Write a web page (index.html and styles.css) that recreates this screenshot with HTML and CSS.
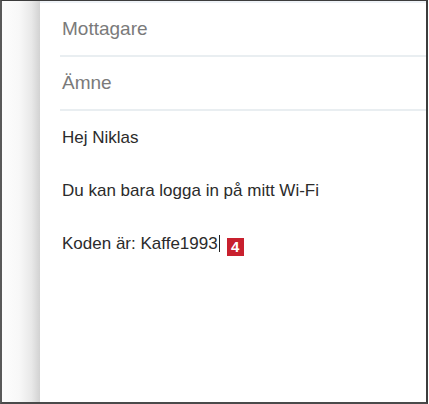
FILE: index.html
```html
<!DOCTYPE html>
<html lang="sv">
<head>
    <meta charset="UTF-8">
    <meta name="viewport" content="width=device-width, initial-scale=1.0">
    <title>Nytt meddelande</title>
    <link rel="stylesheet" href="styles.css">
</head>
<body>
    <div class="frame">
        <!-- Shadow strip on the left -->
        <div class="side-shadow"></div>

        <!-- Compose panel -->
        <div class="compose">
            <div class="field">Mottagare</div>
            <div class="field">Ämne</div>

            <div class="message-body">
                <p>Hej Niklas</p>
                <p>Du kan bara logga in på mitt Wi-Fi</p>
                <p>Koden är: Kaffe1993<span class="caret"></span><span class="badge">4</span></p>
            </div>
        </div>
    </div>
</body>
</html>
```

FILE: styles.css
```css
html, body {
    margin: 0;
    padding: 0;
    background: #fff;
}

.frame {
    box-sizing: border-box;
    width: 428px;
    height: 404px;
    border-top: 1px solid #3c3c3c;
    border-left: 2px solid #5a5a5a;
    border-right: 2px solid #3c3c3c;
    border-bottom: 2px solid #4a4a4a;
    display: flex;
    overflow: hidden;
}

.side-shadow {
    width: 38px;
    flex-shrink: 0;
    background: linear-gradient(to right, #fdfdfd 0%, #f8f8f8 45%, #e8e8e8 78%, #d2d2d2 100%);
}

.compose {
    flex: 1;
    background: #fff;
    border-top: 2px solid #eef2f7;
    font-family: "Liberation Sans", Arial, sans-serif;
}

.field {
    margin-left: 20px;
    padding: 16px 0 16px 2px;
    line-height: 20px;
    font-size: 19px;
    color: #7a7a7a;
    border-bottom: 2px solid #e9eef1;
}

.message-body {
    padding: 17px 0 0 22px;
    font-size: 17px;
    color: #2b2b2b;
}

.message-body p {
    margin: 0 0 33px;
    line-height: 20px;
}

.caret {
    display: inline-block;
    width: 1px;
    height: 17px;
    margin-left: 1px;
    background: #222;
    vertical-align: -3px;
}

.badge {
    display: inline-block;
    width: 17px;
    height: 18px;
    margin-left: 7px;
    background: #c8202e;
    color: #fff;
    font-weight: bold;
    font-size: 15px;
    line-height: 18px;
    text-align: center;
    vertical-align: -3px;
}
```
